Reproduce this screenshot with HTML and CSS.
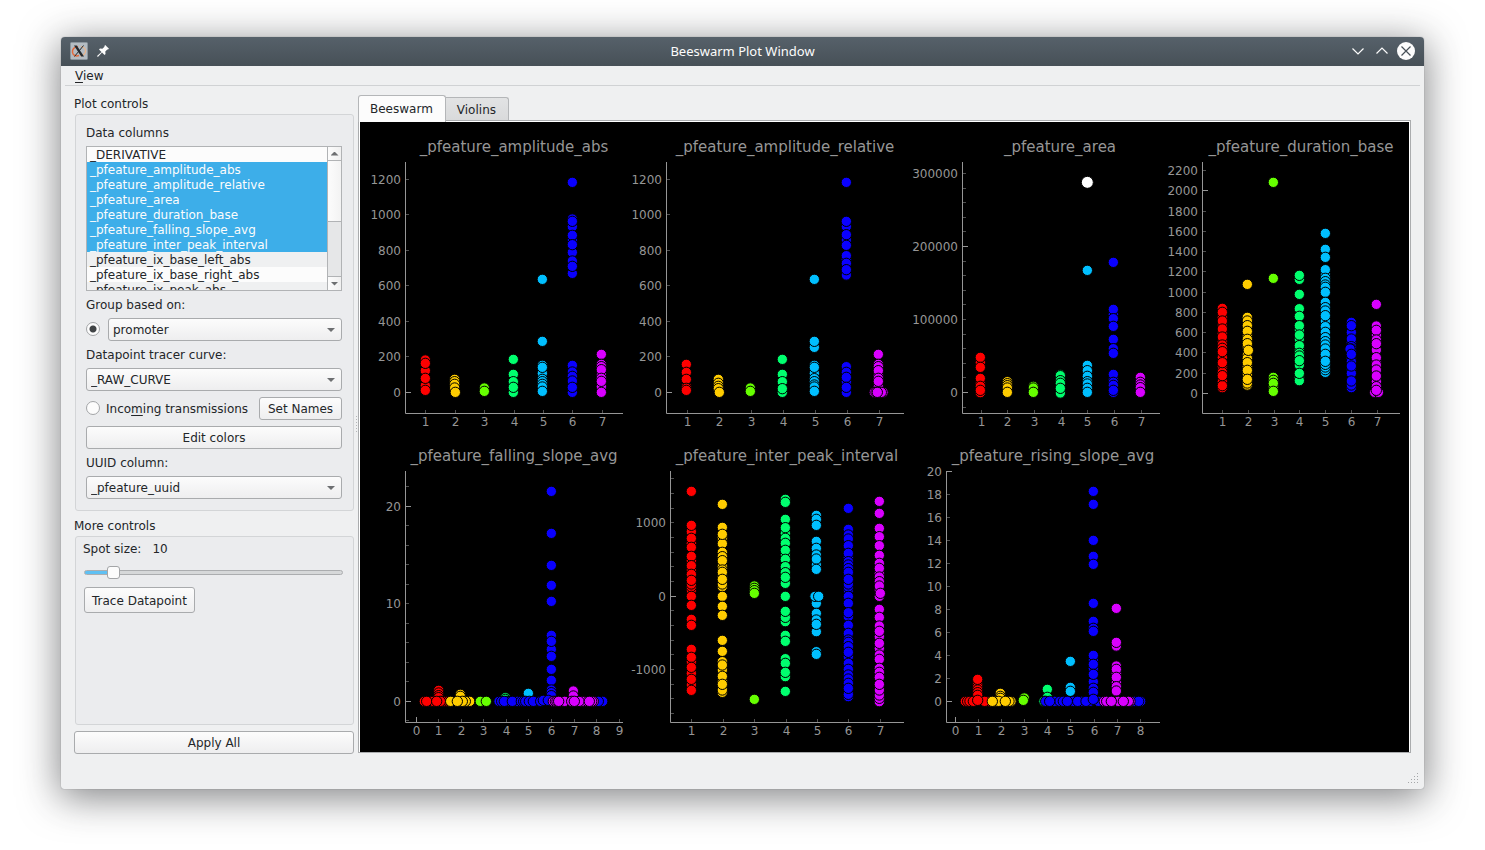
FILE: index.html
```html
<!DOCTYPE html>
<html lang="en">
<head>
<meta charset="utf-8">
<title>Beeswarm Plot Window</title>
<link rel="stylesheet" href="styles.css">
</head>
<body>
<div class="window">
  <header class="titlebar">
    <div class="title-left">
      <svg class="app-icon" viewBox="0 0 18 18" width="18" height="18" aria-hidden="true">
        <rect x="0.5" y="0.5" width="17" height="17" rx="1" fill="#b4bcc2" stroke="#8b959c"/>
        <path d="M8 4.500C4 4.800 2 7.500 2.500 10.500C3 13.500 6 14.500 9 13.500" fill="none" stroke="#e4693a" stroke-width="1.500"/>
        <path d="M11 4.500C15 5 16.500 8 15 11C14 13 12 14 10 14" fill="none" stroke="#e9b48c" stroke-width="1.200"/>
        <path d="M4 3.500h2.800l7.200 11h-2.800z" fill="#24292d"/>
        <path d="M13.500 3.500L4.500 14.500" stroke="#24292d" stroke-width="1"/>
      </svg>
      <svg class="pin-icon" viewBox="0 0 12 12" width="12" height="12" aria-hidden="true">
        <path d="M8.200 0L12 3.800L11 4.600L10.300 4.500L8.300 6.600L8.500 9L7.600 10L5 7.500L0.900 12L0 11.100L4.500 7L2 4.400L3 3.500L5.400 3.700L7.500 1.700L7.400 1z" fill="#fcfcfc"/>
      </svg>
    </div>
    <h1 class="title">Beeswarm Plot Window</h1>
    <div class="title-right">
      <button class="win-btn" type="button" aria-label="Minimize"><svg viewBox="0 0 18 18" width="18" height="18"><path d="M3.500 6.500L9 12L14.500 6.500" fill="none" stroke="#fcfcfc" stroke-width="1.200"/></svg></button>
      <button class="win-btn" type="button" aria-label="Maximize"><svg viewBox="0 0 18 18" width="18" height="18"><path d="M3.500 11.500L9 6L14.500 11.500" fill="none" stroke="#fcfcfc" stroke-width="1.200"/></svg></button>
      <button class="win-btn" type="button" aria-label="Close"><svg viewBox="0 0 18 18" width="18" height="18"><circle cx="9" cy="9" r="9" fill="#fcfcfc"/><path d="M4.500 4.500L13.500 13.500M13.500 4.500L4.500 13.500" fill="none" stroke="#475057" stroke-width="1.200"/></svg></button>
    </div>
  </header>
  <nav class="menubar"><button class="menu-item" type="button"><u>V</u>iew</button></nav>

  <main class="content">
    <form class="sidebar">
      <h2 class="group-title">Plot controls</h2>
      <section class="group group-plot">
        <span class="label" id="columns-label">Data columns</span>
        <div class="list">
          <ul class="list-items" role="listbox" aria-multiselectable="true" aria-labelledby="columns-label">
            <li role="option">_DERIVATIVE</li>
            <li role="option" aria-selected="true">_pfeature_amplitude_abs</li>
            <li role="option" aria-selected="true">_pfeature_amplitude_relative</li>
            <li role="option" aria-selected="true">_pfeature_area</li>
            <li role="option" aria-selected="true">_pfeature_duration_base</li>
            <li role="option" aria-selected="true">_pfeature_falling_slope_avg</li>
            <li role="option" aria-selected="true">_pfeature_inter_peak_interval</li>
            <li role="option">_pfeature_ix_base_left_abs</li>
            <li role="option">_pfeature_ix_base_right_abs</li>
            <li role="option">_pfeature_ix_peak_abs</li>
          </ul>
          <div class="scrollbar" aria-hidden="true">
            <span class="scroll-up"></span>
            <span class="scroll-thumb"></span>
            <span class="scroll-groove"></span>
            <span class="scroll-down"></span>
          </div>
        </div>
        <label class="label" for="group-by">Group based on:</label>
        <div class="row">
          <input class="radio" type="radio" name="source" aria-label="Group by column" checked>
          <div class="combo combo-group"><select id="group-by"><option>promoter</option></select></div>
        </div>
        <label class="label" for="tracer">Datapoint tracer curve:</label>
        <div class="combo"><select id="tracer"><option>_RAW_CURVE</option></select></div>
        <div class="row">
          <input class="radio" type="radio" name="source" id="incoming">
          <label class="label radio-label" for="incoming">Inco<u>m</u>ing transmissions</label>
          <button class="btn btn-names" type="button">Set Names</button>
        </div>
        <button class="btn" type="button">Edit colors</button>
        <label class="label" for="uuid">UUID column:</label>
        <div class="combo"><select id="uuid"><option>_pfeature_uuid</option></select></div>
      </section>
      <h2 class="group-title group-title-more">More controls</h2>
      <section class="group group-more">
        <div class="spot"><label class="label" for="spot">Spot size:</label><output class="label" for="spot">10</output></div>
        <input class="slider" id="spot" type="range" min="1" max="100" value="10">
        <button class="btn btn-trace" type="button">Trace Datapoint</button>
      </section>
      <button class="btn btn-apply" type="button">Apply All</button>
    </form>
    <div class="splitter" aria-hidden="true"></div>
    <section class="tabs">
      <div class="tab-list" role="tablist">
        <button class="tab tab-active" type="button" role="tab" aria-selected="true">Beeswarm</button>
        <button class="tab" type="button" role="tab" aria-selected="false">Violins</button>
      </div>
      <div class="pane" role="tabpanel">
        <div class="plots" id="plots"></div>
      </div>
    </section>
  </main>
  <footer class="statusbar">
    <svg class="grip" viewBox="0 0 10 10" width="10" height="10" aria-hidden="true">
      <path d="M9 0h1v1h-1zM6 3h1v1h-1zM9 3h1v1h-1zM3 6h1v1h-1zM6 6h1v1h-1zM9 6h1v1h-1zM0 9h1v1h-1zM3 9h1v1h-1zM6 9h1v1h-1zM9 9h1v1h-1z" fill="#a5a7a9"/>
    </svg>
  </footer>
</div>
<script src="plots.js"></script>
</body>
</html>
```
FILE: styles.css
```css
* { box-sizing: border-box; }

body {
  margin: 0;
  min-height: 100vh;
  padding: 37px 61px 61px;
  background: #fff;
  color: #232629;
  font-family: "DejaVu Sans", sans-serif;
  font-size: 12px;
  line-height: 17px;
  overflow-x: hidden;
}

button, select, input { font: inherit; color: inherit; margin: 0; }
u { text-underline-offset: 2px; }

.window {
  display: flex;
  flex-direction: column;
  min-height: calc(100vh - 98px);
  background: #eff0f1;
  border-radius: 4px 4px 3px 3px;
  box-shadow: 0 0 1px rgba(60, 64, 68, .7), 0 7px 38px 2px rgba(35, 38, 41, .56);
}

.titlebar {
  display: grid;
  grid-template-columns: 1fr auto 1fr;
  align-items: center;
  height: 29px;
  padding: 0 9px 1px;
  border-radius: 4px 4px 0 0;
  background: linear-gradient(#56616a, #475057);
  color: #fcfcfc;
}
.title { margin: 0; font: 13px/18px "Noto Sans", sans-serif; }
.title-left { display: flex; align-items: center; gap: 9px; }
.title-right { display: flex; justify-content: flex-end; gap: 6px; }
.win-btn { width: 18px; height: 18px; padding: 0; border: 0; background: none; }
.win-btn svg { display: block; }

.menubar {
  height: 20px;
  margin: 0 4px;
  padding: 2px 10px;
  border-bottom: 1px solid #d0d2d4;
}
.menu-item { display: block; padding: 0; border: 0; background: none; }

.content { display: flex; flex: 1; padding: 9px 13px 0; }

.sidebar { display: flex; flex-direction: column; width: 280px; padding-top: 1px; }
.group-title { height: 15px; margin: 0 0 3px; font-size: 12px; font-weight: 400; }
.group-title-more { margin-top: 7px; }
.group {
  display: flex;
  flex-direction: column;
  margin-left: 1px;
  border: 1px solid #d3d5d7;
  border-radius: 3px;
  background: #ebecee;
}
.group-plot { gap: 6px; padding: 10px 11px 11px 10px; }
.group-more { flex: 1; align-items: flex-start; padding: 4px 9px 8px 7px; }
.label { display: block; height: 15px; }
.row { display: flex; align-items: center; }

.list {
  display: flex;
  height: 145px;
  border: 1px solid #b1b3b5;
  background: #fcfcfc;
  overflow: hidden;
}
.list-items { flex: 1; margin: 0; padding: 0; list-style: none; }
.list-items li { height: 15px; padding-left: 3px; white-space: nowrap; }
.list-items li:nth-child(even) { background: #eff0f1; }
.list-items li[aria-selected="true"] { background: #3daee9; color: #fcfcfc; }
.scrollbar {
  display: flex;
  flex-direction: column;
  width: 14px;
  border-left: 1px solid #b1b3b5;
  background: #e6e7e8;
}
.scroll-up, .scroll-down {
  display: grid;
  place-items: center;
  height: 14px;
  background: linear-gradient(90deg, #fcfcfc, #f0f0f0);
}
.scroll-up { border-bottom: 1px solid #b1b3b5; }
.scroll-down { border-top: 1px solid #b1b3b5; }
.scroll-up::before, .scroll-down::before {
  content: "";
  width: 8px;
  height: 4px;
  background: #6d6f71;
  clip-path: polygon(50% 0, 100% 100%, 0 100%);
}
.scroll-down::before { clip-path: polygon(0 0, 100% 0, 50% 100%); }
.scroll-thumb { height: 61px; border-bottom: 1px solid #b1b3b5; background: linear-gradient(90deg, #fcfcfc, #f3f3f3); }
.scroll-groove { flex: 1; }

.btn, .combo select {
  height: 23px;
  border: 1px solid #a9abad;
  border-radius: 3px;
  background: linear-gradient(#fcfcfc, #eeeeef);
}
.btn { padding: 2px 7px 0; }
.combo { position: relative; }
.combo select {
  display: block;
  width: 100%;
  padding: 2px 20px 0 4px;
  appearance: none;
}
.combo::after {
  content: "";
  position: absolute;
  top: 10px;
  right: 7px;
  width: 8px;
  height: 4px;
  background: #6d6f71;
  clip-path: polygon(0 0, 100% 0, 50% 100%);
  pointer-events: none;
}
.combo-group { flex: 1; margin-left: 8px; }
.radio {
  appearance: none;
  width: 14px;
  height: 14px;
  margin-bottom: 1px;
  border: 1px solid #a3a5a7;
  border-radius: 50%;
  background: #fcfcfc;
}
.radio:checked { background: radial-gradient(circle, #414446 0 3px, #fcfcfc 4px); }
.radio-label { margin-left: 6px; white-space: nowrap; }
.btn-names { width: 83px; margin-left: auto; }

.spot { display: flex; gap: 11px; }
.slider {
  appearance: none;
  width: calc(100% - 2px);
  height: 13px;
  margin: 10px 1px 8px;
  background: none;
}
.slider::-webkit-slider-runnable-track {
  height: 5px;
  border: 1px solid #abadaf;
  border-radius: 3px;
  background: linear-gradient(90deg, #5fc0f3 0 10%, #d6d8d9 10%);
}
.slider::-webkit-slider-thumb {
  appearance: none;
  width: 13px;
  height: 13px;
  margin-top: -5px;
  border: 1px solid #a3a5a7;
  border-radius: 3px;
  background: #fcfcfc;
}
.btn-trace { height: 26px; margin-left: 1px; }
.btn-apply { margin-top: 6px; }

.splitter {
  width: 4px;
  background: repeating-linear-gradient(#b4b6b8 0 1px, transparent 1px 3px) 50% 50% / 1px 18px no-repeat;
}

.tabs { display: flex; flex-direction: column; flex: 1; min-width: 0; }
.tab-list { display: flex; align-items: flex-end; height: 25px; }
.tab {
  height: 23px;
  padding: 2px 12px 0 11px;
  border: 1px solid #b4b6b8;
  border-width: 1px 1px 0 0;
  border-radius: 0 3px 0 0;
  background: linear-gradient(#e2e3e4, #d9dadb);
}
.tab-active {
  position: relative;
  height: 27px;
  margin-bottom: -2px;
  padding-top: 0;
  border-width: 1px 1px 0;
  border-radius: 3px 3px 0 0;
  background: #fcfcfc;
}
.pane { flex: 1; margin-bottom: 1px; padding: 1px 1px 0; border: 1px solid #aaacae; background: #fff; }
.plots {
  display: grid;
  grid-template-columns: 265fr 282fr 256fr 246fr;
  align-content: start;
  height: 100%;
  background: #000;
}
.plot { display: block; width: 100%; font-family: "DejaVu Sans", sans-serif; }
.plot-title { fill: #969696; font-size: 15px; text-anchor: middle; }
.tick-label { fill: #969696; font-size: 12px; }
.tick-label-x { text-anchor: middle; }
.tick-label-y { text-anchor: end; }
.axis { fill: none; stroke: #969696; }
.tick { stroke: #505050; }
.tick-major { stroke: #969696; }
.spot-dot { stroke: #000; stroke-width: 3px; }

.statusbar { display: flex; justify-content: flex-end; align-items: flex-end; height: 35px; padding: 6px; }
```
FILE: plots.js
```js
// Spots and ticks are stored in thirds of a pixel, measured from each plot's origin.
const UNIT = 3;
const COLORS = { r: "#ff0000", y: "#ffcc00", g: "#66ff00", t: "#00ff6e", c: "#00bfff", b: "#0a00ff", m: "#d900ff", w: "#ffffff" };

const plots = [
  {
    title: "_pfeature_amplitude_abs", titleX: 154, box: [0, 2, 265, 309], axis: [45, 42, 293, 263],
    x: { 1: 196, 2: 286, 3: 373, 4: 463, 5: 550, 6: 637, 7: 727 },
    y: { 1200: 178, 1000: 284, 800: 391, 600: 497, 400: 604, 200: 710, 0: 817 },
    major: ["y0"],
    cols: [
      ["r", 196, [720, 752, 803, 797, 775, 730, 811]],
      ["y", 284, [778, 785, 793, 804]], ["y", 286, [817]],
      ["g", 373, [804, 814]],
      ["t", 460, [718, 763, 817, 785, 802]],
      ["c", 547, [478, 664, 736, 760, 742, 778, 785, 793, 801, 814]],
      ["b", 637, [187, 297, 320, 304, 360, 346, 397, 374, 423, 460, 439, 736, 756, 769, 783, 817, 802]],
      ["m", 724, [703, 733, 740, 765, 749, 775, 800, 784, 817]]
    ]
  },
  {
    title: "_pfeature_amplitude_relative", titleX: 145, box: [-15, 2, 282, 309], axis: [26, 42, 293, 264],
    x: { 1: 142, 2: 238, 3: 334, 4: 430, 5: 526, 6: 622, 7: 718 },
    y: { 1200: 178, 1000: 284, 800: 391, 600: 497, 400: 604, 200: 710, 0: 817 },
    major: ["y0"],
    cols: [
      ["r", 139, [733, 757, 800, 778, 805, 811]],
      ["y", 235, [778, 790, 799, 806]], ["y", 238, [817]],
      ["g", 331, [804, 814]],
      ["t", 427, [718, 763, 785, 817, 806]],
      ["c", 523, [478, 682, 664, 736, 760, 742, 776, 785, 795, 801, 814]],
      ["b", 619, [187, 320, 304, 360, 344, 376, 418, 407, 430, 465, 449, 740, 757, 785, 772, 817, 802]],
      ["m", 715, [703, 733, 740, 766, 752, 775, 800, 784]]
    ],
    rows: [["m", 817, [703, 708, 729, 724, 712]]]
  },
  {
    title: "_pfeature_area", titleX: 160, box: [7, 2, 256, 309], axis: [62, 42, 293, 260],
    x: { 1: 244, 2: 322, 3: 403, 4: 484, 5: 562, 6: 643, 7: 724 },
    y: { 300000: 160, 200000: 379, 100000: 598, 0: 817 },
    minor: [205, 248, 292, 335, 423, 467, 511, 554, 642, 686, 730, 773, 861],
    major: ["y0", "y200000"],
    cols: [
      ["r", 241, [728, 712, 742, 790, 775, 818, 799, 811]],
      ["y", 322, [785, 791, 797, 804, 817]],
      ["g", 400, [799, 804, 817]],
      ["t", 481, [764, 767, 782, 790, 819, 805]],
      ["c", 562, [451, 736, 752, 769, 785, 792, 805, 817]],
      ["b", 640, [427, 583, 568, 596, 619, 658, 686, 700, 778, 763, 787, 796, 817, 811]],
      ["m", 721, [772, 787, 795, 803, 817]]
    ],
    big: [[562, 187]]
  },
  {
    title: "_pfeature_duration_base", titleX: 141, box: [3, 2, 246, 309], axis: [42, 42, 293, 240],
    x: { 1: 187, 2: 265, 3: 342, 4: 419, 5: 497, 6: 574, 7: 652 },
    y: { 2200: 151, 2000: 211, 1800: 274, 1600: 334, 1400: 394, 1200: 454, 1000: 517, 800: 577, 600: 637, 400: 697, 200: 760, 0: 820 },
    major: ["y0", "y2000"],
    cols: [
      ["r", 187, [565, 592, 577, 615, 603, 640, 627, 665, 651, 675, 685, 712, 695, 740, 750, 757, 728, 785, 803, 797, 767]],
      ["y", 262, [493, 592, 603, 617, 648, 634, 658, 680, 671, 705, 715, 740, 728, 762, 751, 795, 789, 778]], ["y", 265, [691]],
      ["g", 340, [187, 475, 772, 781, 800, 790, 814]],
      ["t", 418, [478, 466, 523, 566, 589, 630, 617, 657, 645, 690, 677, 700, 708, 735, 722, 772, 782, 760]],
      ["c", 496, [340, 388, 412, 465, 449, 475, 485, 495, 502, 517, 547, 563, 573, 603, 587, 620, 637, 653, 665, 675, 687, 713, 703, 757, 749, 741, 733, 724]],
      ["b", 574, [607, 637, 617, 668, 657, 680, 687, 695, 715, 740, 725, 750, 760, 738, 803, 795, 783]],
      ["b", 570, [687]], ["b", 574, [703]],
      ["m", 649, [553, 618, 645, 631, 660, 690, 671, 726, 713, 735, 750, 785, 768, 800]]
    ],
    rows: [["m", 817, [644, 655]], ["m", 811, [649]]]
  },
  {
    title: "_pfeature_falling_slope_avg", titleX: 154, box: [0, -9, 265, 321], axis: [45, 31, 282, 263],
    x: { 0: 168, 1: 236, 2: 303, 3: 371, 4: 439, 5: 505, 6: 574, 7: 643, 8: 710, 9: 778 },
    y: { 20: 199, 10: 490, 0: 784 },
    minor: [139, 257, 316, 374, 433, 550, 608, 667, 725, 842],
    major: ["y0", "y20", "x0"],
    cols: [
      ["r", 236, [751, 759, 767, 773]], ["y", 301, [763, 769]], ["t", 436, [773, 778]], ["c", 505, [762, 775, 760]],
      ["b", 574, [154, 280, 376, 436, 484, 586, 628, 604, 649, 688, 721, 750, 758, 767]], ["m", 640, [753, 768]]
    ],
    rows: [
      ["r", 784, [193, 212, 266, 259, 253, 247, 241, 220, 200, 230]],
      ["y", 784, [272, 329, 316, 307, 292]],
      ["g", 784, [361, 379]],
      ["b", 784, [417, 425, 472, 441, 433, 457, 484, 491, 497, 508, 535, 520, 542]],
      ["b", 781, [550, 565]], ["b", 784, [728, 715]],
      ["m", 784, [580, 586, 591, 614, 635, 700, 695, 672, 665, 657, 688, 643, 596]]
    ]
  },
  {
    title: "_pfeature_inter_peak_interval", titleX: 167, box: [5, -9, 282, 321], axis: [50, 31, 282, 284],
    x: { 1: 214, 2: 310, 3: 403, 4: 499, 5: 592, 6: 685, 7: 781 },
    y: { 1000: 248, 0: 469, "-1000": 688 },
    minor: [115, 160, 205, 293, 337, 380, 424, 512, 557, 601, 644, 733, 776, 820],
    major: ["y0"],
    cols: [
      ["r", 214, [154, 275, 256, 310, 295, 322, 362, 349, 390, 377, 403, 450, 440, 432, 421, 469, 496, 538, 556, 628, 665, 652, 700, 682, 735, 718, 751]],
      ["y", 307, [193, 262, 300, 292, 311, 283, 337, 350, 380, 362, 390, 410, 397, 440, 432, 418, 469, 499, 526, 601, 634, 665, 690, 675, 725, 709, 757, 750, 733]],
      ["g", 403, [438, 445, 452, 460, 778]],
      ["t", 496, [178, 187, 238, 280, 263, 295, 310, 345, 331, 358, 380, 398, 430, 412, 469, 545, 532, 514, 586, 604, 656, 670, 710, 697, 754]],
      ["c", 589, [226, 238, 256, 304, 325, 345, 375, 357, 388, 490, 520, 540, 575, 553, 635, 643]],
      ["b", 685, [205, 268, 285, 297, 317, 352, 340, 365, 375, 386, 408, 397, 450, 441, 432, 418, 469, 490, 530, 518, 556, 580, 600, 607, 620, 650, 637, 670, 688, 705, 717, 730, 770, 763, 745]],
      ["m", 778, [184, 220, 265, 290, 317, 346, 370, 400, 385, 411, 425, 450, 438, 469, 508, 532, 558, 590, 574, 625, 610, 645, 658, 685, 697, 712, 785, 775, 765, 750, 733]]
    ],
    rows: [["c", 469, [585, 596]], ["m", 460, [781]]]
  },
  {
    title: "_pfeature_rising_slope_avg", titleX: 143, box: [-3, -9, 256, 321], axis: [36, 31, 282, 250],
    x: { 0: 136, 1: 205, 2: 274, 3: 343, 4: 412, 5: 482, 6: 552, 7: 622, 8: 691 },
    y: { 20: 94, 18: 163, 16: 232, 14: 301, 12: 370, 10: 439, 8: 508, 6: 577, 4: 646, 2: 715, 0: 784 },
    major: ["y0", "y20", "x0"],
    cols: [
      ["r", 203, [733, 742, 750, 758, 766, 718]], ["y", 271, [760, 769, 775]], ["g", 343, [774]], ["g", 340, [781]],
      ["t", 412, [748, 772]], ["c", 481, [664, 742, 754]],
      ["b", 550, [154, 193, 301, 349, 373, 490, 544, 565, 574, 660, 646, 685, 673, 725, 703, 745, 757]],
      ["m", 619, [505, 618, 607, 678, 700, 688, 728, 712, 740, 753]]
    ],
    rows: [
      ["r", 784, [166, 173, 180, 238, 231, 224, 190]], ["r", 781, [203]],
      ["y", 784, [303, 297, 256, 266, 247, 286]],
      ["t", 784, [402]],
      ["b", 784, [407, 434, 450, 460, 490, 525, 515, 540, 419, 472, 503, 528, 565]], ["b", 778, [550]],
      ["b", 784, [692, 673, 686]],
      ["m", 784, [583, 590, 618, 625, 660, 655, 604, 640]]
    ]
  }
];

function dot(color, x, y, r) {
  return `<circle class="spot-dot" fill="${COLORS[color]}" cx="${x}" cy="${y}" r="${r || 15.5}"/>`;
}

function draw(plot) {
  const [left, top, bottom, right] = plot.axis;
  const row = (pos) => Math.floor(pos / UNIT) + 0.5;
  const tick = (axis, pos, major, len) => {
    const p = row(pos);
    const d = axis === "y" ? `M${left + 1} ${p}h${len}` : `M${p} ${bottom}v${-len}`;
    return `<path class="tick${major ? " tick-major" : ""}" d="${d}"/>`;
  };
  let out = `<path class="axis" d="M${left + 0.5} ${top}V${bottom + 0.5}H${right}"/>`;
  for (const pos of plot.minor || []) out += tick("y", pos, false, 3);
  for (const [axis, ticks] of [["y", plot.y], ["x", plot.x]]) {
    for (const [text, pos] of Object.entries(ticks)) {
      const major = plot.major.includes(axis + text);
      out += tick(axis, pos, major, major ? 5 : 3);
      const [x, y] = axis === "y" ? [left - 4, Math.floor(pos / UNIT) + 5] : [row(pos), bottom + 13];
      out += `<text class="tick-label tick-label-${axis}" x="${x}" y="${y}">${text}</text>`;
    }
  }
  out += `<text class="plot-title" x="${plot.titleX}" y="${top - 10}">${plot.title}</text>`;
  out += `<g transform="scale(${1 / UNIT})">`;
  for (const [c, x, ys] of plot.cols) for (const y of ys) out += dot(c, x, y);
  for (const [c, y, xs] of plot.rows || []) for (const x of xs) out += dot(c, x, y);
  for (const [x, y] of plot.big || []) out += dot("w", x, y, 18);
  return `<svg class="plot" viewBox="${plot.box.join(" ")}" role="img" aria-label="${plot.title}">${out}</g></svg>`;
}

document.getElementById("plots").innerHTML = plots.map(draw).join("");
```
